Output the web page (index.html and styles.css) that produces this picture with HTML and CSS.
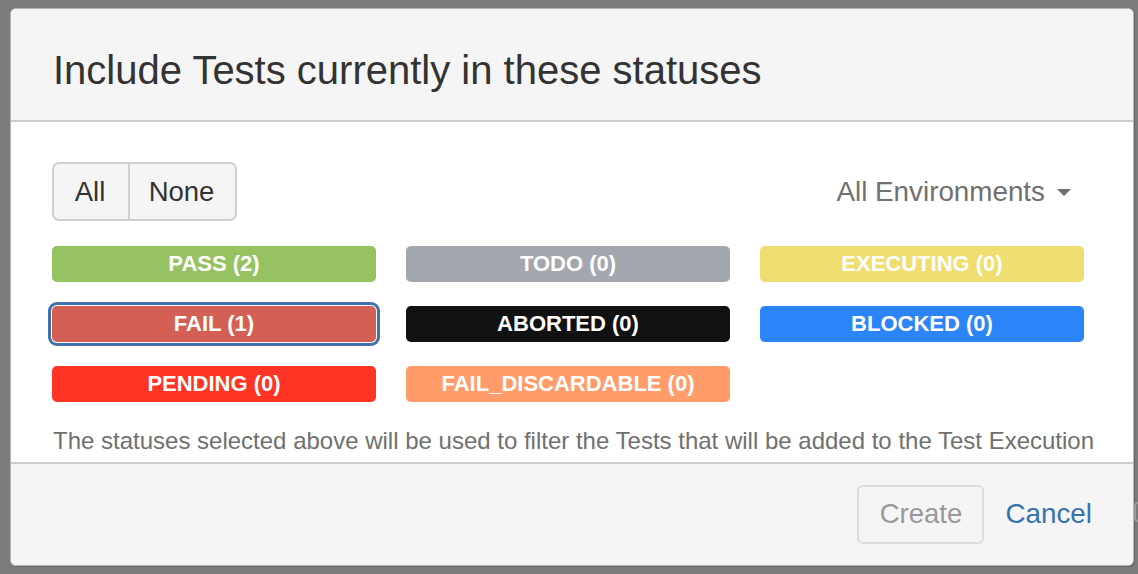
FILE: index.html
```html
<!DOCTYPE html>
<html>
<head>
<meta charset="utf-8">
<link rel="stylesheet" href="styles.css">
</head>
<body>
<div class="backdrop">
  <div class="dialog">
    <div class="header">
      <h2 class="title">Include Tests currently in these statuses</h2>
    </div>
    <div class="content">
      <div class="toolbar">
        <div class="btn-group">
          <button class="btn">All</button>
          <button class="btn">None</button>
        </div>
        <div class="env">All Environments <span class="caret"></span></div>
      </div>
      <div class="statuses">
        <div class="status pass">PASS (2)</div>
        <div class="status todo">TODO (0)</div>
        <div class="status executing">EXECUTING (0)</div>
        <div class="status fail selected">FAIL (1)</div>
        <div class="status aborted">ABORTED (0)</div>
        <div class="status blocked">BLOCKED (0)</div>
        <div class="status pending">PENDING (0)</div>
        <div class="status discardable">FAIL_DISCARDABLE (0)</div>
      </div>
      <p class="desc">The statuses selected above will be used to filter the Tests that will be added to the Test Execution</p>
    </div>
    <div class="footer">
      <button class="create">Create</button>
      <a class="cancel" href="#">Cancel</a>
    </div>
  </div>
  <div class="peek"></div>
</div>
</body>
</html>
```
FILE: styles.css
```css
* { box-sizing: border-box; }
html, body { margin: 0; padding: 0; }
body {
  width: 1138px;
  height: 574px;
  overflow: hidden;
  background: #7b7b7b;
  font-family: "Liberation Sans", Arial, Helvetica, sans-serif;
}
.backdrop {
  position: relative;
  padding: 8px 0 0 10px;
  height: 574px;
}
.dialog {
  width: 1124px;
  height: 558px;
  background: #fff;
  border: 1px solid #b4b4b4;
  border-radius: 6px;
  box-shadow: 1px 1px 1px rgba(0,0,0,0.15);
  display: flex;
  flex-direction: column;
  overflow: hidden;
}
.header {
  height: 113px;
  flex: none;
  background: #f5f5f5;
  border-bottom: 2px solid #cccccc;
  display: flex;
  align-items: center;
  padding-left: 42px;
}
.title {
  margin: 0;
  font-weight: normal;
  font-size: 40px;
  color: #333333;
  line-height: 1;
  padding-top: 10px;
}
.content {
  flex: 1;
  padding: 40px 48px 0 41px;
  overflow: hidden;
}
.toolbar {
  display: flex;
  justify-content: space-between;
  align-items: center;
}
.btn-group {
  display: flex;
  height: 59px;
  border: 2px solid #cfcfcf;
  border-radius: 7px;
  background: #f5f5f5;
  overflow: hidden;
}
.btn {
  font-family: inherit;
  font-size: 27.5px;
  color: #333;
  background: transparent;
  border: 0;
  margin: 0;
  height: 100%;
}
.btn + .btn {
  border-left: 2px solid #cfcfcf;
}
.btn:first-child { width: 74px; padding: 0 2px 0 0; }
.btn:last-child { width: 107px; padding: 0 2px 0 0; }
.env {
  font-size: 27.8px;
  color: #707070;
  display: flex;
  align-items: center;
  gap: 12px;
  margin-right: 14px;
  padding-bottom: 0;
}
.caret {
  width: 0;
  height: 0;
  border-left: 7px solid transparent;
  border-right: 7px solid transparent;
  border-top: 7px solid #707070;
  margin-top: 2px;
}
.statuses {
  margin-top: 25px;
  display: grid;
  grid-template-columns: repeat(3, 324px);
  column-gap: 30px;
  row-gap: 24px;
}
.status {
  height: 36px;
  border-radius: 5px;
  color: #fff;
  font-weight: bold;
  font-size: 22px;
  display: flex;
  align-items: center;
  justify-content: center;
}
.pass { background: #96c262; }
.todo { background: #a3a7ae; }
.executing { background: #f0de71; }
.fail { background: #d45f55; }
.aborted { background: #111111; }
.blocked { background: #2b84f8; }
.pending { background: #ff3424; }
.discardable { background: #ff9c69; }
.selected {
  box-shadow: 0 0 0 1px #ffffff, 0 0 0 4px #3f72a8;
}
.desc {
  margin: 22px 0 0 1px;
  font-size: 24px;
  line-height: 34px;
  color: #707070;
  white-space: nowrap;
}
.footer {
  height: 103px;
  flex: none;
  background: #f5f5f5;
  border-top: 2px solid #cccccc;
  display: flex;
  align-items: center;
  justify-content: flex-end;
  padding-right: 41px;
  gap: 21px;
}
.create {
  font-family: inherit;
  font-size: 27.5px;
  color: #999999;
  background: #f5f5f5;
  border: 2px solid #dddddd;
  border-radius: 6px;
  width: 127px;
  height: 59px;
  padding: 0;
  margin-bottom: 1px;
}
.cancel {
  font-size: 27.8px;
  color: #3572b0;
  text-decoration: none;
  padding-bottom: 2px;
}
.peek {
  position: absolute;
  left: 1134px;
  top: 502px;
  width: 8px;
  height: 20px;
  border: 2px solid #9a9a9a;
  border-radius: 6px;
}
```
